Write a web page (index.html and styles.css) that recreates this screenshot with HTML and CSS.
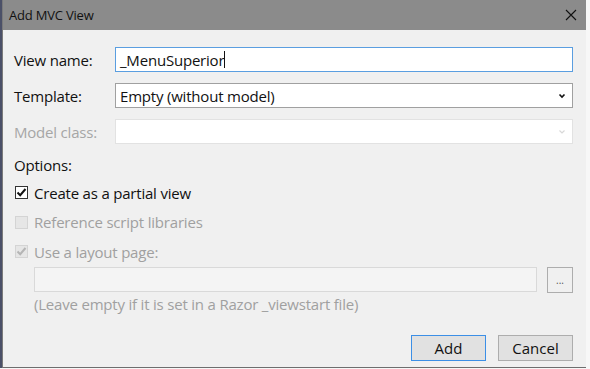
FILE: index.html
```html
<!DOCTYPE html>
<html lang="en">
<head>
    <meta charset="UTF-8">
    <title>Add MVC View</title>
    <link rel="stylesheet" href="styles.css">
</head>
<body>
    <div class="desk">
        <div class="dialog">
            <div class="titlebar">
                <span class="title">Add MVC View</span>
                <svg class="close" width="12" height="12" viewBox="0 0 12 12">
                    <path d="M1 1 L11 11 M11 1 L1 11" stroke="#111" stroke-width="1.1" fill="none"/>
                </svg>
            </div>

            <div class="content">
                <div class="row">
                    <label class="lbl">View name:</label>
                    <div class="field focus">_MenuSuperior<span class="caret"></span></div>
                </div>
                <div class="row">
                    <label class="lbl">Template:</label>
                    <div class="field select">
                        Empty (without model)
                        <svg class="chev" width="8" height="6" viewBox="0 0 8 6"><path d="M1.5 1.5 L4 4 L6.5 1.5" stroke="#111" stroke-width="1.6" fill="none"/></svg>
                    </div>
                </div>
                <div class="row">
                    <label class="lbl off">Model class:</label>
                    <div class="field disabled">
                        <svg class="chev" width="8" height="6" viewBox="0 0 8 6"><path d="M1.5 1.5 L4 4 L6.5 1.5" stroke="#d8d8d8" stroke-width="1.2" fill="none"/></svg>
                    </div>
                </div>

                <div class="options">Options:</div>

                <div class="check">
                    <span class="box on">
                        <svg width="11" height="11" viewBox="0 0 11 11"><path d="M1.5 5.5 L4.2 8.2 L9.5 2" stroke="#111" stroke-width="2" fill="none"/></svg>
                    </span>
                    <span>Create as a partial view</span>
                </div>
                <div class="check off">
                    <span class="box dim"></span>
                    <span>Reference script libraries</span>
                </div>
                <div class="check off">
                    <span class="box dim">
                        <svg width="11" height="11" viewBox="0 0 11 11"><path d="M1.5 5.5 L4.2 8.2 L9.5 2" stroke="#b5b5b5" stroke-width="2" fill="none"/></svg>
                    </span>
                    <span>Use a layout page:</span>
                </div>

                <div class="layout-row">
                    <div class="layout-input"></div>
                    <div class="browse">...</div>
                </div>
                <div class="hint">(Leave empty if it is set in a Razor _viewstart file)</div>

                <div class="buttons">
                    <button class="btn default">Add</button>
                    <button class="btn">Cancel</button>
                </div>
            </div>
        </div>
    </div>
</body>
</html>
```

FILE: styles.css
```css
html, body {
    margin: 0;
    padding: 0;
    background-color: #f7f7f7;
    font-family: "Open Sans", "Noto Sans", sans-serif;
}
.desk {
    width: 586px;
    height: 368px;
    border-left: 2px solid #4b5068;
    box-sizing: border-box;
}
.dialog {
    width: 584px;
    height: 368px;
    box-sizing: border-box;
    border-left: 1px solid #7a7a7a;
    border-bottom: 1px solid #6e6e6e;
    background-color: #f0f0f0;
}
.titlebar {
    height: 30px;
    background-color: #8b8b8b;
    display: flex;
    align-items: center;
    justify-content: space-between;
    padding: 0 9px 0 6px;
}
.title {
    font-size: 13px;
    color: #111;
    letter-spacing: -0.2px;
}
.content {
    padding: 17px 13px 0 11px;
    font-size: 15px;
    color: #111;
}
.row {
    display: flex;
    align-items: center;
    height: 25px;
    margin-bottom: 11px;
}
.lbl {
    width: 101px;
    flex: none;
    letter-spacing: -0.2px;
}
.lbl.off {
    color: #a6a6a6;
}
.field {
    flex: 1;
    height: 25px;
    box-sizing: border-box;
    background-color: #fff;
    border: 1px solid #a0a0a0;
    display: flex;
    align-items: center;
    padding-left: 4px;
    letter-spacing: -0.2px;
}
.field.focus {
    border-color: #5a9ee0;
}
.caret {
    display: inline-block;
    width: 1px;
    height: 17px;
    background-color: #111;
}
.field.select, .field.disabled {
    justify-content: space-between;
    padding-right: 6px;
}
.field.disabled {
    border-color: #e2e2e2;
    justify-content: flex-end;
}
.options {
    height: 23px;
    line-height: 20px;
    letter-spacing: -0.2px;
}
.check {
    display: flex;
    align-items: center;
    height: 29.5px;
    letter-spacing: -0.2px;
}
.check.off {
    color: #a0a0a0;
}
.box {
    width: 13px;
    height: 13px;
    box-sizing: border-box;
    border: 1px solid #333;
    background-color: #fff;
    margin: 0 6px 0 1px;
    display: flex;
    align-items: center;
    justify-content: center;
}
.box.dim {
    border-color: #d4d4d4;
    background-color: #e6e6e6;
}
.layout-row {
    display: flex;
    gap: 10px;
    margin: 0 0 0 20px;
}
.layout-input {
    flex: 1;
    height: 25px;
    box-sizing: border-box;
    background-color: #f4f4f4;
    border: 1px solid #d9d9d9;
}
.browse {
    width: 26px;
    height: 26px;
    box-sizing: border-box;
    border: 1px solid #adadad;
    background-color: #f0f0f0;
    font-size: 10px;
    color: #555;
    text-align: center;
    line-height: 24px;
}
.hint {
    margin: 1px 0 0 20px;
    line-height: 20px;
    color: #a0a0a0;
    letter-spacing: -0.2px;
}
.buttons {
    display: flex;
    justify-content: flex-end;
    gap: 12px;
    margin-top: 21px;
}
.btn {
    width: 75px;
    height: 26px;
    box-sizing: border-box;
    border: 1px solid #adadad;
    background-color: #e1e1e1;
    font-family: "Open Sans", "Noto Sans", sans-serif;
    font-size: 15px;
    color: #111;
    padding: 0;
}
.btn.default {
    border-color: #3c8fe6;
}
```
